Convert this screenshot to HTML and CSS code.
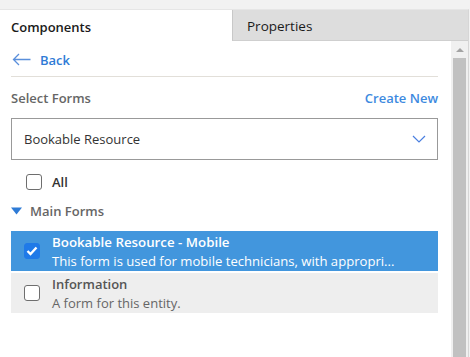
FILE: index.html
```html
<!DOCTYPE html>
<html lang="en">
<head>
    <meta charset="UTF-8">
    <title>Form Components</title>
    <link rel="stylesheet" href="styles.css">
</head>
<body>
    <div class="frame">
        <div class="tabs">
            <div class="tab active">Components</div>
            <div class="tab">Properties</div>
        </div>

        <div class="panel">
            <div class="content">
                <a class="back" href="#">
                    <svg width="19" height="13" viewBox="0 0 19 13">
                        <path d="M7 1 L1.5 6.5 L7 12 M1.5 6.5 H18.5" fill="none" stroke="#5a8fdb" stroke-width="1.3"/>
                    </svg>
                    <span>Back</span>
                </a>

                <div class="section-head">
                    <span class="section-title">Select Forms</span>
                    <a class="create-link" href="#">Create New</a>
                </div>

                <div class="dropdown">
                    <span>Bookable Resource</span>
                    <svg width="14" height="8" viewBox="0 0 14 8">
                        <polyline points="1,1 7,7 13,1" fill="none" stroke="#4a7fe0" stroke-width="1.2"/>
                    </svg>
                </div>

                <label class="all-row">
                    <span class="check"></span>
                    <span>All</span>
                </label>

                <div class="group-head">
                    <svg width="11" height="8" viewBox="0 0 11 8">
                        <polygon points="0,0.5 11,0.5 5.5,7.5" fill="#2e7bd6"/>
                    </svg>
                    <span>Main Forms</span>
                </div>

                <div class="form-list">
                    <div class="form-row selected">
                        <span class="check checked">
                            <svg width="12" height="10" viewBox="0 0 12 10">
                                <polyline points="1.5,5 4.5,8 10.5,1.5" fill="none" stroke="#fff" stroke-width="2.4"/>
                            </svg>
                        </span>
                        <div class="form-text">
                            <div class="form-name">Bookable Resource - Mobile</div>
                            <div class="form-desc">This form is used for mobile technicians, with appropri...</div>
                        </div>
                    </div>
                    <div class="form-row">
                        <span class="check"></span>
                        <div class="form-text">
                            <div class="form-name">Information</div>
                            <div class="form-desc">A form for this entity.</div>
                        </div>
                    </div>
                </div>
            </div>

            <div class="scrollbar">
                <div class="scroll-arrow"></div>
                <div class="scroll-thumb"></div>
            </div>
        </div>
    </div>
</body>
</html>
```

FILE: styles.css
```css
html, body {
    margin: 0;
    height: 100%;
    overflow: hidden;
}
body {
    font-family: "Open Sans", "Noto Sans", sans-serif;
    font-size: 13px;
    background: #f2f2f2;
    padding-top: 9px;
    box-sizing: border-box;
}
.frame {
    width: 468px;
    height: 348px;
    border-right: 1px solid #d6d6d6;
    border-top: 1px solid #e6e6e6;
    background: white;
    display: flex;
    flex-direction: column;
}
.tabs {
    display: flex;
    height: 31px;
}
.tab {
    flex: 1;
    display: flex;
    align-items: center;
    padding: 2px 0 0 14px;
    font-size: 13.5px;
    color: #1a1a1a;
    background: #dddddd;
    border-left: 1px solid #c8c8c8;
    border-bottom: 1px solid #cfcfcf;
}
.tab.active {
    flex: 0 0 221px;
    padding-left: 11px;
    background: white;
    border: none;
    font-size: 13px;
    font-weight: 600;
}
.panel {
    flex: 1;
    display: flex;
    min-height: 0;
}
.content {
    flex: 1;
    padding: 0 13px 0 11px;
}
.back {
    display: flex;
    align-items: center;
    gap: 9px;
    height: 36px;
    padding: 2px 0 0 1px;
    box-sizing: border-box;
    border-bottom: 1px solid #e2dfd9;
    color: #2f7bd6;
    text-decoration: none;
    font-weight: 600;
}
.section-head {
    display: flex;
    justify-content: space-between;
    align-items: center;
    height: 20px;
    margin: 11px 0 10px;
}
.section-title {
    color: #666;
    font-weight: 600;
}
.create-link {
    color: #3d8ae0;
    text-decoration: none;
    font-weight: 600;
}
.dropdown {
    display: flex;
    justify-content: space-between;
    align-items: center;
    height: 42px;
    box-sizing: border-box;
    border: 1px solid #999;
    padding: 0 11px 0 12px;
    color: #333;
}
.all-row {
    display: flex;
    align-items: center;
    gap: 10px;
    height: 32px;
    margin-top: 6px;
    padding-left: 15px;
    color: #333;
    font-weight: 600;
}
.check {
    flex: none;
    width: 16px;
    height: 16px;
    box-sizing: border-box;
    border: 1px solid #6e6e6e;
    border-radius: 3px;
    background: white;
    display: flex;
    align-items: center;
    justify-content: center;
}
.check.checked {
    background: #1f7ae8;
    border-color: #1f7ae8;
}
.group-head {
    display: flex;
    align-items: center;
    gap: 8px;
    height: 24px;
    margin: 1px 0 8px;
    color: #666;
    font-weight: 600;
}
.form-list {
    display: flex;
    flex-direction: column;
    gap: 2px;
}
.form-row {
    display: flex;
    align-items: center;
    gap: 12px;
    height: 40px;
    padding-left: 13px;
    background: #eeeeee;
}
.form-row.selected {
    background: #4296dd;
}
.form-text {
    line-height: 19px;
    padding-top: 1px;
}
.form-name {
    font-weight: 600;
    color: #555;
}
.form-desc {
    color: #666;
}
.selected .form-name {
    color: white;
    font-size: 13.3px;
}
.selected .form-desc {
    color: white;
    font-size: 13.1px;
}
.scrollbar {
    flex: 0 0 17px;
    background: #f0f0f0;
    display: flex;
    flex-direction: column;
    align-items: center;
}
.scroll-arrow {
    margin: 7px 0 6px;
    width: 0;
    height: 0;
    border-left: 4px solid transparent;
    border-right: 4px solid transparent;
    border-bottom: 4px solid #a3a3a3;
}
.scroll-thumb {
    flex: 1;
    width: 13px;
    background: #c1c1c1;
}
```
